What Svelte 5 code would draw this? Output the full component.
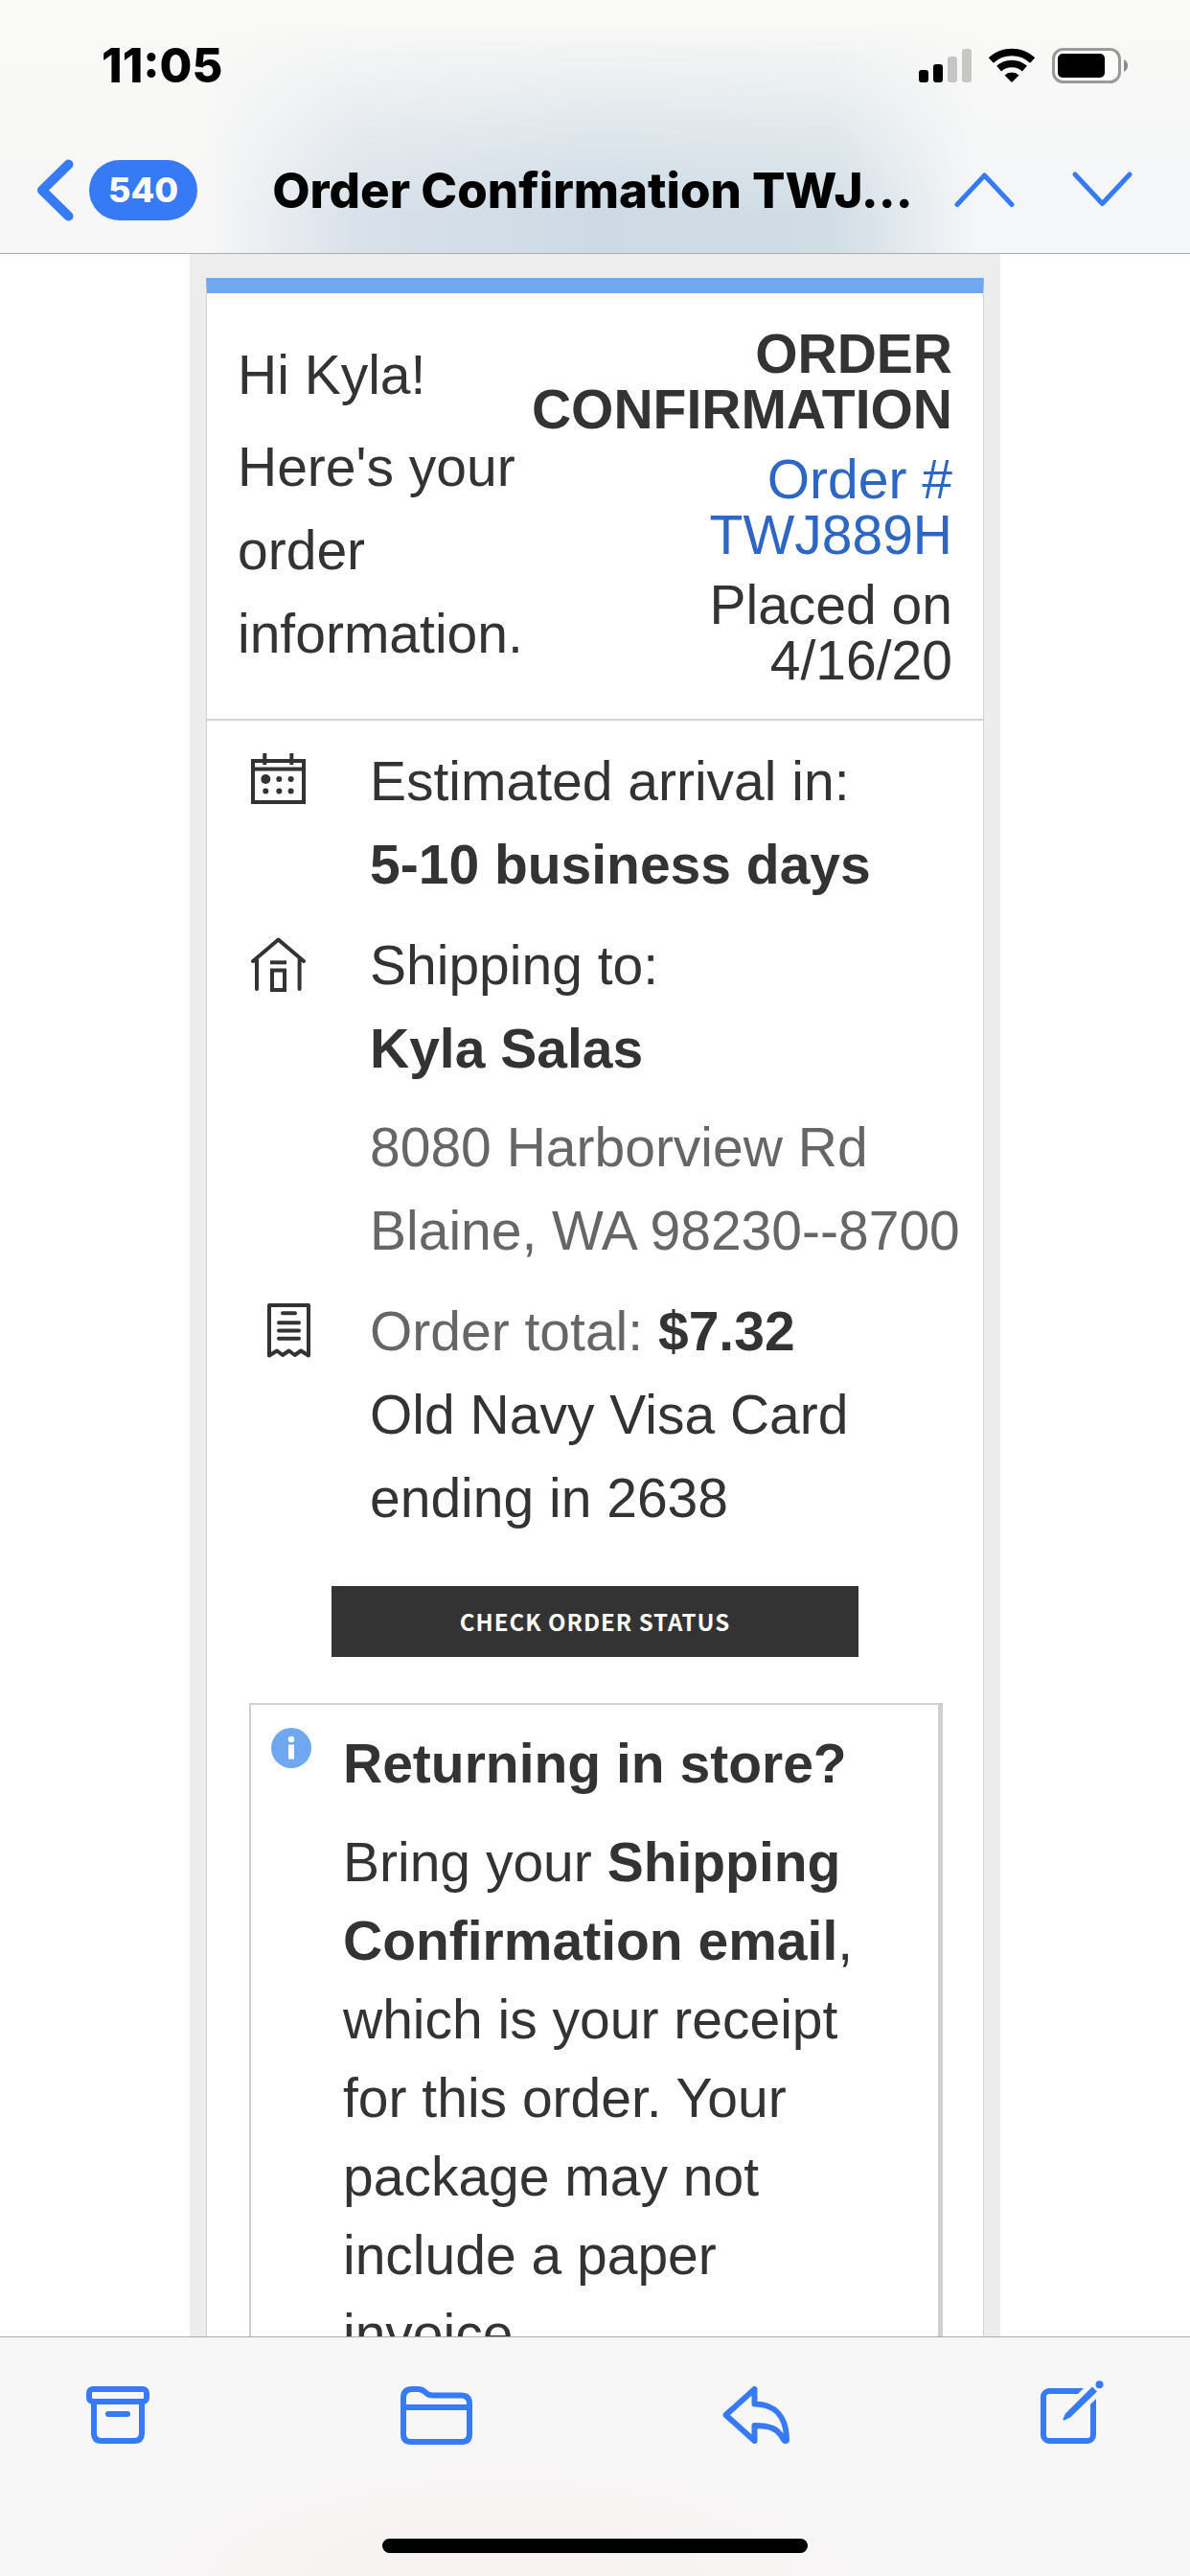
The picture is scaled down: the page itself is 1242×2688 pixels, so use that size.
<script lang="ts">
  let time = '11:05';
  let unread = 540;
  let subject = 'Order Confirmation TWJ...';

  let order = {
    firstName: 'Kyla',
    number: 'TWJ889H',
    placed: '4/16/20',
    arrival: '5-10 business days',
    name: 'Kyla Salas',
    address: ['8080 Harborview Rd', 'Blaine, WA 98230--8700'],
    total: '$7.32',
    payment: ['Old Navy Visa Card', 'ending in 2638']
  };

  // signal bars, left to right
  const bars = [
    { height: 13, on: true },
    { height: 19, on: true },
    { height: 27, on: false },
    { height: 35, on: false }
  ];
</script>

<div class="screen">
  <header class="top">
    <div class="status">
      <span class="time">{time}</span>
      <div class="status-icons">
        <svg width="55" height="36" viewBox="0 0 55 36" aria-hidden="true">
          {#each bars as bar, i}
            <rect x={i * 15} y={36 - bar.height} width="10" height={bar.height} rx="3" fill={bar.on ? '#000' : '#c6c6c5'} />
          {/each}
        </svg>
        <svg width="48" height="36" viewBox="0 0 48 36" aria-hidden="true">
          <path d="M2.4 13A32 32 0 0 1 45.6 13M10.6 21.6A20 20 0 0 1 37.4 21.6" fill="none" stroke="#000" stroke-width="7.5" />
          <path d="M24 36L16.5 28.5A11 11 0 0 1 31.5 28.5Z" />
        </svg>
        <svg width="79" height="37" viewBox="0 0 79 37" aria-hidden="true">
          <rect x="1.5" y="1.5" width="69" height="34" rx="10" fill="#fff" fill-opacity="0.4" stroke="#999" stroke-width="3" />
          <rect x="6" y="6" width="49" height="25" rx="5" />
          <path d="M75 12Q79 14 79 18.5T75 25Z" fill="#8c8c8c" />
        </svg>
      </div>
    </div>

    <nav class="nav">
      <button class="back" aria-label="Back to mailbox">
        <svg class="stroke" width="39" height="65" viewBox="0 0 39 65" stroke-width="10" aria-hidden="true">
          <path d="M33.5 5.5L6 32.5L33.5 59.5" />
        </svg>
        <span class="pill">{unread}</span>
      </button>
      <h1 class="subject">{subject}</h1>
      <button aria-label="Previous message">
        <svg class="stroke" width="63" height="38" viewBox="0 0 63 38" stroke-width="5" aria-hidden="true">
          <path d="M3 34.5L31.5 4L60 34.5" />
        </svg>
      </button>
      <button aria-label="Next message">
        <svg class="stroke" width="63" height="38" viewBox="0 0 63 38" stroke-width="5" aria-hidden="true">
          <path d="M3 3L31.5 33.5L60 3" />
        </svg>
      </button>
    </nav>
  </header>

  <main class="mail">
    <div class="frame">
      <article class="card">
        <section class="intro">
          <div class="greeting">
            <p>Hi {order.firstName}!</p>
            <p>Here's your order information.</p>
          </div>
          <div class="summary">
            <h2>ORDER CONFIRMATION</h2>
            <a href="#order">Order # {order.number}</a>
            <p>Placed on {order.placed}</p>
          </div>
        </section>

        <section class="details">
          <div class="row">
            <svg class="icon" width="64" height="58" viewBox="0 0 64 58" aria-hidden="true">
              <rect x="2" y="8" width="53" height="43" stroke-width="4" />
              <path d="M2 16.5H55M14.3 0V12M42.3 0V12" stroke-width="4" />
              <g class="dots">
                <circle cx="15.3" cy="27" r="5" />
                <circle cx="29.3" cy="27" r="3" />
                <circle cx="41.6" cy="27" r="3" />
                <circle cx="15.3" cy="39.5" r="3" />
                <circle cx="29.3" cy="39.5" r="3" />
                <circle cx="41.6" cy="39.5" r="3" />
              </g>
            </svg>
            <div>
              <p>Estimated arrival in:</p>
              <p class="bold">{order.arrival}</p>
            </div>
          </div>

          <div class="row">
            <svg class="icon" width="64" height="58" viewBox="0 0 64 58" aria-hidden="true">
              <path d="M2 25L28.5 2.5L55 25M6 23V54M50.6 23V54" stroke-width="4" stroke-linecap="round" stroke-linejoin="round" />
              <path d="M20 26.3H37" stroke-width="4" />
              <rect x="22" y="34.5" width="13" height="20.5" stroke-width="4" />
            </svg>
            <div>
              <p>Shipping to:</p>
              <p class="bold">{order.name}</p>
              <address>
                {#each order.address as line}
                  <p>{line}</p>
                {/each}
              </address>
            </div>
          </div>

          <div class="row">
            <svg class="icon" width="64" height="58" viewBox="0 0 64 58" aria-hidden="true">
              <path d="M19 54.5V2H60V54.5L52 49.5L45.7 54L39.6 49.5L33 54L27 49.5Z" stroke-width="4" stroke-linejoin="round" />
              <path d="M33 10.3H46M29 20.3H50M29 28.5H50M29 36.7H50" stroke-width="4" stroke-linecap="round" />
            </svg>
            <div>
              <p><span class="muted">Order total:</span> <b>{order.total}</b></p>
              {#each order.payment as line}
                <p>{line}</p>
              {/each}
            </div>
          </div>
        </section>

        <a class="cta" href="#status">CHECK ORDER STATUS</a>

        <aside class="returns">
          <svg class="info" width="42" height="42" viewBox="0 0 42 42" aria-hidden="true">
            <circle cx="21" cy="21" r="21" fill="#6fa8f1" />
            <circle cx="21" cy="12" r="3.3" fill="#fff" />
            <path d="M18 17.5H24V32.5H18Z" fill="#fff" />
          </svg>
          <div>
            <h3>Returning in store?</h3>
            <p>
              Bring your <b>Shipping Confirmation email</b>, which is your receipt for this order.
              Your package may not include a paper invoice.
            </p>
          </div>
        </aside>
      </article>
    </div>
  </main>

  <footer class="bottom">
    <div class="tools">
      <button aria-label="Archive">
        <svg class="stroke" width="66" height="60" viewBox="0 0 66 60" stroke-width="6" aria-hidden="true">
          <rect x="3" y="3" width="60" height="13" rx="4" />
          <path d="M8 17V49Q8 57 16 57H50Q58 57 58 49V17M23 29H43" />
        </svg>
      </button>
      <button aria-label="Move to folder">
        <svg class="stroke" width="75" height="61" viewBox="0 0 75 61" stroke-width="6" aria-hidden="true">
          <path d="M3 50V12Q3 3 12 3H18Q22 3 25 5.5L28 8Q30 9.5 34 9.5H63Q72 9.5 72 18V50Q72 58 64 58H11Q3 58 3 50ZM3 22H72" />
        </svg>
      </button>
      <button aria-label="Reply">
        <svg class="stroke" width="70" height="60" viewBox="0 0 70 60" stroke-width="6" aria-hidden="true">
          <path d="M33.5 3V18.5C56 18.5 67 33 67 56.5Q66 57.5 64.5 56.5C58 44 50 41 33.5 41V57L3.5 30Z" />
        </svg>
      </button>
      <button aria-label="Compose">
        <svg width="66" height="72" viewBox="0 0 66 72" aria-hidden="true">
          <rect x="3" y="11" width="52" height="52" rx="6" fill="none" stroke="#367af6" stroke-width="6" />
          <path d="M30 35L64 1" stroke="#f7f7f7" stroke-width="17" />
          <path d="M54 6.5L59 11.5L31 38.5L25 41.5Q23 42 23.5 40L26 34.5Z" fill="#367af6" />
          <circle cx="61.5" cy="4.3" r="4" fill="#367af6" />
        </svg>
      </button>
    </div>
    <div class="home"></div>
  </footer>
</div>

<style>
  :global(body) {
    margin: 0;
    background: #fff;
  }

  .screen {
    display: flex;
    flex-direction: column;
    height: 100vh;
    overflow: hidden;
    font-family: 'Liberation Sans', Arial, Helvetica, sans-serif;
    font-size: 57px;
    line-height: 87px;
    color: #333;
  }

  p,
  h1,
  h2,
  h3 {
    margin: 0;
    font-size: inherit;
  }

  button {
    display: flex;
    align-items: center;
    padding: 0;
    border: 0;
    background: none;
    cursor: pointer;
  }

  svg {
    display: block;
    flex: none;
  }

  .stroke {
    fill: none;
    stroke: #367af6;
    stroke-linecap: round;
    stroke-linejoin: round;
  }

  /* header */
  .top {
    flex: none;
    border-bottom: 1px solid #a9abad;
    background:
      linear-gradient(to bottom, #f9f9f7 8%, rgba(249, 249, 247, 0.4) 52%, rgba(249, 249, 247, 0) 85%),
      linear-gradient(to right, #f7f7f7 17%, #d9e1ea 30%, #cddae5 50%, #d1dde5 70%, #f5f6f8 82%);
    color: #000;
    font-family: Inter, sans-serif;
    font-weight: 800;
  }

  .status {
    display: flex;
    align-items: center;
    justify-content: space-between;
    height: 136px;
    padding: 0 65px 0 106px;
  }

  .time {
    font-size: 49px;
  }

  .status-icons {
    display: flex;
    align-items: center;
    gap: 18px;
  }

  .nav {
    display: flex;
    align-items: center;
    gap: 60px;
    height: 124px;
    padding: 0 60px 4px 38px;
  }

  .back {
    gap: 16px;
  }

  .pill {
    padding: 0 20px;
    border-radius: 32px;
    background: #367af6;
    color: #fff;
    font: 800 36px/63px Inter, sans-serif;
  }

  .subject {
    flex: 1;
    min-width: 0;
    padding-left: 18px;
    margin-right: -20px;
    font-size: 51px;
    font-weight: 800;
    white-space: nowrap;
  }

  /* message */
  .mail {
    flex: 1;
    min-height: 0;
    overflow: hidden;
  }

  .frame {
    margin: 0 198px;
    padding: 25px 17px 0;
    background: #ededed;
  }

  .card {
    border: 1px solid #d0d0d0;
    border-top: 16px solid #6fa8f1;
    background: #fff;
    padding-bottom: 48px;
  }

  .intro {
    display: flex;
    justify-content: space-between;
    padding: 34px 32px 32px;
    border-bottom: 2px solid #d2d2d2;
  }

  .greeting {
    flex: 1;
    display: flex;
    flex-direction: column;
    gap: 9px;
    padding-top: 8px;
  }

  .summary {
    display: flex;
    flex-direction: column;
    gap: 15px;
    width: 442px;
    line-height: 58px;
    text-align: right;
  }

  .summary a {
    color: #2d66c3;
    text-decoration: none;
  }

  .details {
    display: flex;
    flex-direction: column;
    gap: 18px;
    padding: 20px 0 0 46px;
  }

  .row {
    display: flex;
    gap: 60px;
  }

  .icon {
    margin-top: 14px;
    fill: none;
    stroke: #333;
  }

  .dots {
    fill: #333;
    stroke: none;
  }

  .bold {
    font-weight: 700;
  }

  .muted,
  address {
    color: #666;
  }

  address {
    margin-top: 16px;
    font-style: normal;
    white-space: nowrap;
  }

  .cta {
    display: block;
    width: 550px;
    margin: 48px auto;
    background: #333;
    color: #fff;
    font: 700 24px/74px 'Noto Sans CJK SC', 'Open Sans', sans-serif;
    letter-spacing: 1px;
    text-align: center;
    text-decoration: none;
  }

  .returns {
    display: flex;
    gap: 33px;
    margin: 0 42px 0 44px;
    padding: 18px 50px 48px 21px;
    border: 2px solid #d0d0d0;
    border-right-width: 5px;
  }

  .info {
    margin-top: 6px;
  }

  .returns p {
    margin-top: 18px;
    line-height: 82px;
  }

  /* toolbar */
  .bottom {
    flex: none;
    display: flex;
    flex-direction: column;
    align-items: center;
    justify-content: space-between;
    height: 249px;
    border-top: 1px solid #a9abad;
    background: radial-gradient(ellipse at 42% 110%, #f7f0ef, #f7f7f7 45%);
  }

  .tools {
    display: flex;
    align-items: center;
    justify-content: space-between;
    box-sizing: border-box;
    width: 100%;
    padding: 45px 90px 0;
  }

  .home {
    width: 444px;
    height: 15px;
    margin-bottom: 24px;
    border-radius: 8px;
    background: #000;
  }
</style>
